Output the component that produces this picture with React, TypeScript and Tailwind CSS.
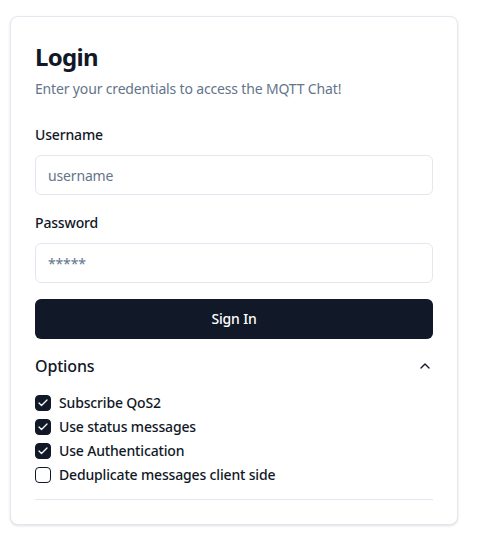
import { useState } from 'react';
import { ChevronUp, Check } from 'lucide-react';

const options = [
    { label: 'Subscribe QoS2', checked: true },
    { label: 'Use status messages', checked: true },
    { label: 'Use Authentication', checked: true },
    { label: 'Deduplicate messages client side', checked: false },
];

const Checkbox = ({ checked, onToggle }: { checked: boolean; onToggle: () => void }) => (
    <button
        type="button"
        onClick={onToggle}
        className={`flex h-4 w-4 shrink-0 items-center justify-center rounded-[4px] border border-[#111827] ${
            checked ? 'bg-[#111827] text-white' : 'bg-white'
        }`}
    >
        {checked && <Check className="h-3 w-3" strokeWidth={2.5} />}
    </button>
);

export default function App() {
    const [values, setValues] = useState(options.map((o) => o.checked));
    const [open, setOpen] = useState(true);

    return (
        <div
            className="min-h-[558px] bg-white px-[10px] pt-4 tracking-[-0.01em] text-[#111827]"
            style={{ fontFamily: '"Noto Sans", sans-serif' }}
        >
            <div className="w-[448px] rounded-lg border border-[#e2e8f0] bg-white p-6 shadow-sm">
                <h1 className="text-2xl font-bold leading-8 tracking-[-0.03em]">Login</h1>
                <p className="mt-1.5 text-sm leading-5 text-[#64748b]">
                    Enter your credentials to access the MQTT Chat!
                </p>

                <label className="mt-[26px] block text-sm font-medium leading-5">Username</label>
                <input
                    className="mt-2.5 h-10 w-full rounded-md border border-[#e2e8f0] px-3 text-sm outline-none placeholder:text-[#64748b]"
                    placeholder="username"
                />

                <label className="mt-[18px] block text-sm font-medium leading-5">Password</label>
                <input
                    type="password"
                    className="mt-2.5 h-10 w-full rounded-md border border-[#e2e8f0] px-3 text-sm outline-none placeholder:text-[#64748b]"
                    placeholder="*****"
                />

                <button className="mt-4 h-10 w-full rounded-md bg-[#111827] text-sm font-medium text-white">
                    Sign In
                </button>

                <div className="mt-[15px] border-b border-[#e2e8f0] pb-3">
                    <button
                        type="button"
                        onClick={() => setOpen(!open)}
                        className="flex w-full items-center justify-between text-base font-medium leading-6"
                    >
                        Options
                        <ChevronUp className={`h-4 w-4 ${open ? '' : 'rotate-180'}`} />
                    </button>
                    {open && (
                        <div className="mt-[13px] flex flex-col">
                            {options.map((o, i) => (
                                <div key={o.label} className="flex h-6 items-center gap-2">
                                    <Checkbox
                                        checked={values[i]}
                                        onToggle={() =>
                                            setValues(values.map((v, j) => (j === i ? !v : v)))
                                        }
                                    />
                                    <span className="text-sm font-medium leading-5">{o.label}</span>
                                </div>
                            ))}
                        </div>
                    )}
                </div>
            </div>
        </div>
    );
}
